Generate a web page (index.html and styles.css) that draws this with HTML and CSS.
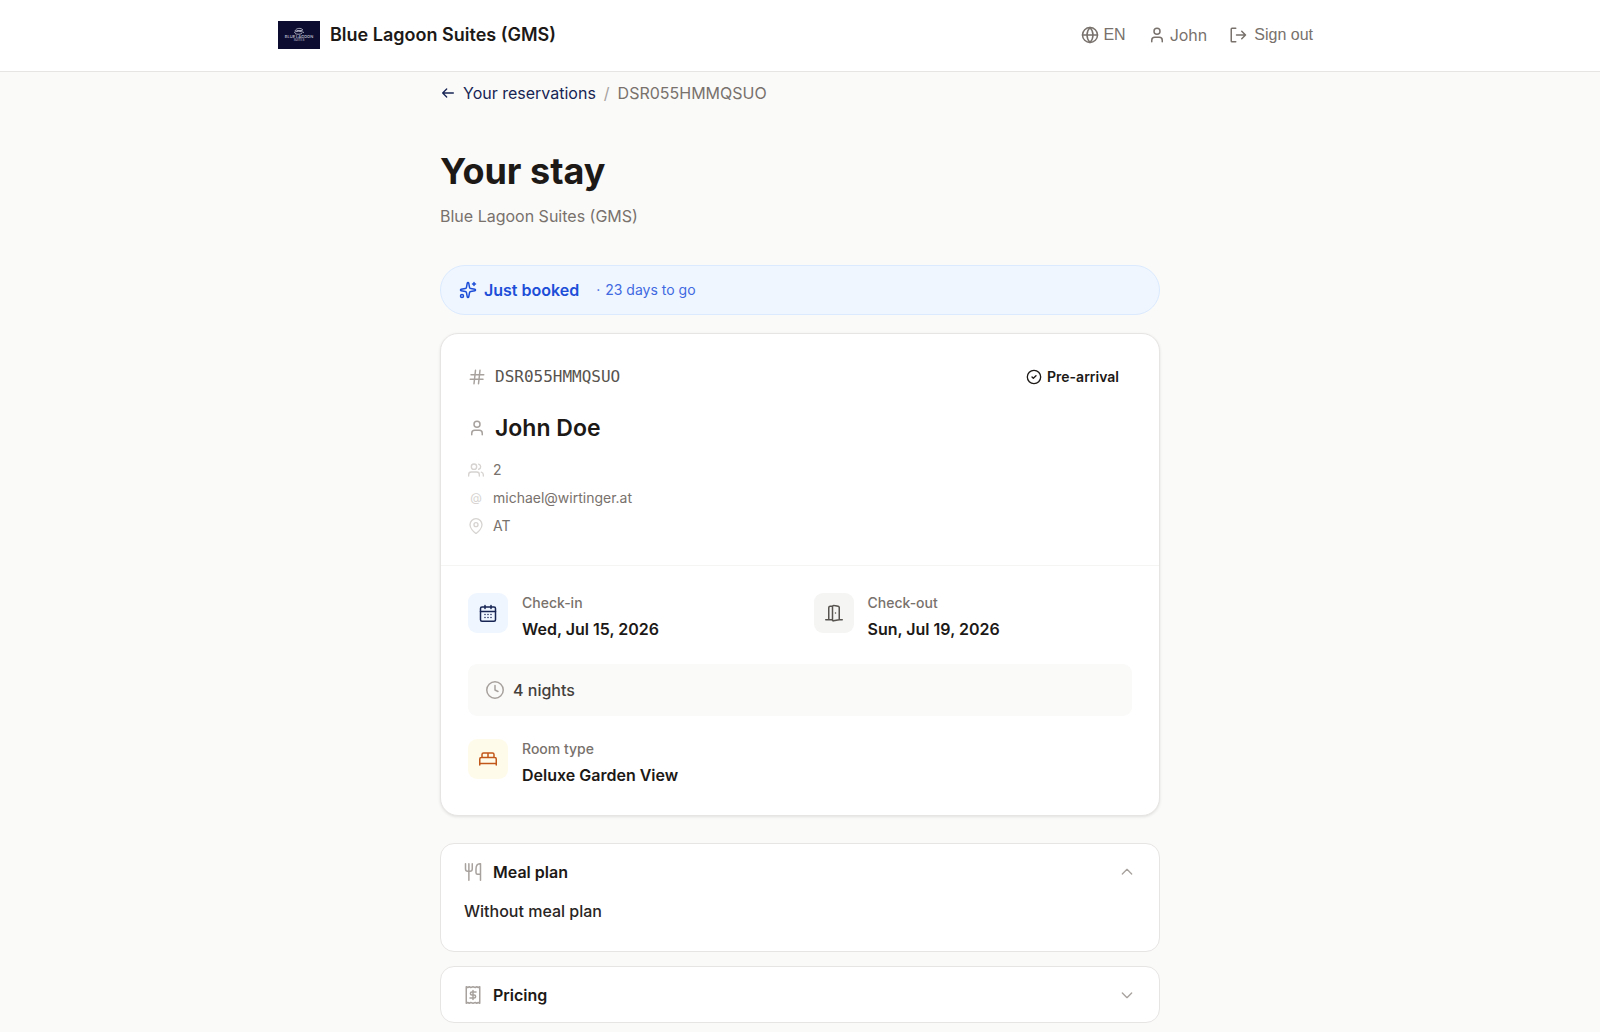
FILE: index.html
```html
<!DOCTYPE html>
<html lang="en">
<head>
  <meta charset="UTF-8" />
  <meta name="viewport" content="width=device-width, initial-scale=1" />
  <title>Your stay - Blue Lagoon Suites (GMS)</title>
  <link rel="stylesheet" href="styles.css">
</head>
<body>
  <header class="site-header">
    <div class="header-inner">
      <a class="brand" href="#">
        <svg class="logo" viewBox="0 0 42 28" role="img" aria-label="Blue Lagoon Suites">
          <rect width="42" height="28" fill="#0b0c30" />
          <g fill="none" stroke="#c9cad8" stroke-width="0.8">
            <path d="M16 11.500c2-1.600 7-1.600 10 0M17 10c1-3 6-3.500 8-1M17 12.500c2 1.200 6 1 7-.5M18.500 9.500h6" />
          </g>
          <text x="21" y="16.600" text-anchor="middle" class="logo-name">BLUE LAGOON</text>
          <text x="21" y="20" text-anchor="middle" class="logo-sub">SUITES</text>
        </svg>
        <span>Blue Lagoon Suites (GMS)</span>
      </a>
      <nav class="header-nav">
        <button class="nav-button lang" type="button">
          <svg class="icon icon-18" viewBox="0 0 24 24"><circle cx="12" cy="12" r="10" /><path d="M12 2a14.500 14.500 0 0 0 0 20 14.500 14.500 0 0 0 0-20M2 12h20" /></svg>
          EN
        </button>
        <a class="nav-link" href="#">
          <svg class="icon icon-18" viewBox="0 0 24 24"><path d="M19 21v-2a4 4 0 0 0-4-4H9a4 4 0 0 0-4 4v2" /><circle cx="12" cy="7" r="4" /></svg>
          John
        </a>
        <button class="nav-button sign-out" type="button">
          <svg class="icon icon-18" viewBox="0 0 24 24"><path d="M9 21H4a1 1 0 0 1-1-1V4a1 1 0 0 1 1-1h5M17 17l5-5-5-5M22 12H10" /></svg>
          Sign out
        </button>
      </nav>
    </div>
  </header>

  <main class="page">
    <nav class="breadcrumb" aria-label="Breadcrumb">
      <a href="#">
        <svg class="icon icon-16" viewBox="0 0 24 24"><path d="M10 18l-6-6 6-6M20 12H4" /></svg>
        Your reservations
      </a>
      <span class="slash">/</span>
      <span>DSR055HMMQSUO</span>
    </nav>

    <h1>Your stay</h1>
    <p class="subtitle">Blue Lagoon Suites (GMS)</p>

    <div class="status-banner">
      <svg class="icon icon-18" viewBox="0 0 24 24"><path d="M11.017 2.814a1 1 0 0 1 1.966 0l1.051 5.558a2 2 0 0 0 1.594 1.594l5.558 1.051a1 1 0 0 1 0 1.966l-5.558 1.051a2 2 0 0 0-1.594 1.594l-1.051 5.558a1 1 0 0 1-1.966 0l-1.051-5.558a2 2 0 0 0-1.594-1.594l-5.558-1.051a1 1 0 0 1 0-1.966l5.558-1.051a2 2 0 0 0 1.594-1.594zM20 2v4M22 4h-4" /><circle cx="4" cy="20" r="2" /></svg>
      <strong>Just booked</strong>
      <span class="countdown"><span>·</span> 23 days to go</span>
    </div>

    <section class="card">
      <div class="card-top">
        <div class="card-head">
          <div class="code">
            <svg class="icon icon-18" viewBox="0 0 24 24"><path d="M4 9h17M3 15h17M10 3L8 21M16 3l-2 18" /></svg>
            <span>DSR055HMMQSUO</span>
          </div>
          <div class="stage">
            <svg class="icon icon-16" viewBox="0 0 24 24"><circle cx="12" cy="12" r="10" /><path d="M9 12l2 2 4-4" /></svg>
            Pre-arrival
          </div>
        </div>
        <h2 class="guest">
          <svg class="icon icon-18" viewBox="0 0 24 24"><path d="M19 21v-2a4 4 0 0 0-4-4H9a4 4 0 0 0-4 4v2" /><circle cx="12" cy="7" r="4" /></svg>
          John Doe
        </h2>
        <ul class="guest-info">
          <li>
            <svg class="icon icon-16" viewBox="0 0 24 24"><path d="M17 21v-2a4 4 0 0 0-4-4H5a4 4 0 0 0-4 4v2" /><circle cx="9" cy="7" r="4" /><path d="M23 21v-2a4 4 0 0 0-3-3.870M16 3.130a4 4 0 0 1 0 7.750" /></svg>
            2
          </li>
          <li><span class="at">@</span> michael@wirtinger.at</li>
          <li>
            <svg class="icon icon-16" viewBox="0 0 24 24"><path d="M21 10c0 5-6 11-8.400 12.800a1 1 0 0 1-1.200 0C9 21 3 15 3 10a9 9 0 0 1 18 0" /><circle cx="12" cy="10" r="3" /></svg>
            AT
          </li>
        </ul>
      </div>

      <div class="card-details">
        <div class="dates">
          <div class="detail">
            <div class="tile tile-blue">
              <svg class="icon icon-18" viewBox="0 0 24 24"><rect x="2" y="4" width="20" height="19" rx="2" /><path d="M8 2v4M16 2v4M2 10h20M8 14h.01M12 14h.01M16 14h.01M8 18h.01M12 18h.01M16 18h.01" /></svg>
            </div>
            <div>
              <div class="label">Check-in</div>
              <div class="value">Wed, Jul 15, 2026</div>
            </div>
          </div>
          <div class="detail">
            <div class="tile tile-gray">
              <svg class="icon icon-18" viewBox="0 0 24 24"><path d="M10 21H1M10 3.500v18a1 1 0 0 0 1.240.97L19 21V4.500a2 2 0 0 0-1.520-1.500l-5-1A2 2 0 0 0 10 3.500zM10 3H7a2 2 0 0 0-2 2v16M14 12h.01M23 21h-4" /></svg>
            </div>
            <div>
              <div class="label">Check-out</div>
              <div class="value">Sun, Jul 19, 2026</div>
            </div>
          </div>
        </div>

        <div class="nights">
          <svg class="icon icon-18" viewBox="0 0 24 24"><circle cx="12" cy="12" r="11" /><path d="M12 6v6l4 2" /></svg>
          4 nights
        </div>

        <div class="detail">
          <div class="tile tile-amber">
            <svg class="icon icon-18" viewBox="0 0 24 24"><path d="M1 20v-8a2 2 0 0 1 2-2h18a2 2 0 0 1 2 2v8M4 10V6a2 2 0 0 1 2-2h12a2 2 0 0 1 2 2v4M12 4v6M1 18h22" /></svg>
          </div>
          <div>
            <div class="label">Room type</div>
            <div class="value">Deluxe Garden View</div>
          </div>
        </div>
      </div>
    </section>

    <div class="panels">
      <section class="panel">
        <button class="panel-toggle" type="button" aria-expanded="true" aria-controls="mealPlan">
          <svg class="icon icon-18" viewBox="0 0 24 24"><path d="M2 1v7a3 3 0 0 0 3 3h3a3 3 0 0 0 3-3V1M6.500 1v22M22 23V1h-1c-3 0-5 3-5 7v5a2 2 0 0 0 2 2h4" /></svg>
          <span>Meal plan</span>
          <svg class="icon icon-16 chevron" viewBox="0 0 24 24"><path d="M5 15l7-7 7 7" /></svg>
        </button>
        <div class="panel-body" id="mealPlan">Without meal plan</div>
      </section>
      <section class="panel">
        <button class="panel-toggle" type="button" aria-expanded="false" aria-controls="pricing">
          <svg class="icon icon-18" viewBox="0 0 24 24"><path d="M3 1v22l2-1 2 1 2-1 3 1 3-1 2 1 2-1 2 1V1l-2 1-2-1-2 1-3-1-3 1-2-1-2 1zM16 8h-5.500a2 2 0 0 0 0 4h3a2 2 0 0 1 0 4H8M12 6v12" /></svg>
          <span>Pricing</span>
          <svg class="icon icon-16 chevron" viewBox="0 0 24 24"><path d="M5 9l7 7 7-7" /></svg>
        </button>
        <div class="panel-body" id="pricing" hidden></div>
      </section>
    </div>
  </main>

  <script>
    document.querySelectorAll('.panel-toggle').forEach((btn) => {
      btn.addEventListener('click', () => {
        const open = btn.getAttribute('aria-expanded') === 'true';
        btn.setAttribute('aria-expanded', String(!open));
        document.getElementById(btn.getAttribute('aria-controls')).hidden = open;
      });
    });
  </script>
</body>
</html>
```
FILE: styles.css
```css
* {
  box-sizing: border-box;
}
body {
  margin: 0;
  font-family: Inter, "Liberation Sans", sans-serif;
  font-size: 16px;
  line-height: 24px;
  background-color: #fafaf9;
  color: #1c1917;
}
h1, h2, p, ul {
  margin: 0;
  padding: 0;
}
a {
  color: inherit;
  text-decoration: none;
}
button {
  background: none;
  border: none;
  padding: 0;
  color: inherit;
  cursor: pointer;
}
.icon {
  flex-shrink: 0;
  fill: none;
  stroke: currentColor;
  stroke-width: 2;
  stroke-linecap: round;
  stroke-linejoin: round;
}
.icon-18 {
  width: 18px;
  height: 18px;
}
.icon-16 {
  width: 16px;
  height: 16px;
}

/* header */
.site-header {
  background-color: #fff;
  border-bottom: 1px solid #e7e5e4;
}
.header-inner {
  max-width: 1080px;
  min-height: 71px;
  margin: 0 auto;
  padding: 0 18px 1px;
  display: flex;
  justify-content: space-between;
  align-items: center;
}
.brand {
  display: flex;
  align-items: center;
  gap: 10px;
  font-size: 18px;
  font-weight: 600;
}
.logo {
  width: 42px;
  height: 28px;
}
.logo-name {
  font-size: 4px;
  font-weight: 500;
  fill: #c9cad8;
}
.logo-sub {
  font-size: 3px;
  fill: #a5a6ba;
}
.header-nav {
  display: flex;
  align-items: center;
  gap: 22px;
  padding-right: 9px;
  color: #78716c;
}
.nav-link, .nav-button {
  display: flex;
  align-items: center;
  gap: 4px;
}
.nav-button {
  font-family: "Liberation Sans", Arial, sans-serif;
  font-size: 16px;
}
.sign-out {
  gap: 7px;
}

/* page */
.page {
  max-width: 756px;
  margin: 0 auto;
  padding: 9px 18px;
}
.breadcrumb {
  display: flex;
  align-items: center;
  gap: 8px;
  color: #78716c;
}
.breadcrumb a {
  display: flex;
  align-items: center;
  gap: 7px;
  color: #172554;
}
.slash {
  color: #a8a29e;
}
h1 {
  margin-top: 46px;
  font-size: 36px;
  line-height: 40px;
  font-weight: 700;
}
.subtitle {
  margin-top: 13px;
  color: #78716c;
}
.status-banner {
  display: flex;
  align-items: center;
  gap: 7px;
  margin-top: 37px;
  padding: 12px 18px;
  border: 1px solid #dbeafe;
  border-radius: 26px;
  background-color: #eff6ff;
  color: #1d4ed8;
}
.status-banner strong {
  font-weight: 600;
}
.countdown {
  display: flex;
  gap: 5px;
  margin-left: 10px;
  font-size: 14px;
  color: #4169e1;
}

/* reservation card */
.card {
  margin-top: 18px;
  border: 1px solid #e7e5e4;
  border-radius: 18px;
  background-color: #fff;
  box-shadow: 0 1px 3px rgba(0, 0, 0, 0.1);
}
.card-top {
  padding: 31px 27px 29px;
  border-bottom: 1px solid #f5f5f4;
}
.card-head {
  display: flex;
  justify-content: space-between;
  align-items: center;
}
.code {
  display: flex;
  align-items: center;
  gap: 9px;
  color: #a8a29e;
}
.code span {
  font-family: "DejaVu Sans Mono", monospace;
  color: #57534e;
}
.stage {
  display: flex;
  align-items: center;
  gap: 5px;
  padding-right: 13px;
  font-size: 14px;
  font-weight: 600;
}
.guest {
  display: flex;
  align-items: center;
  gap: 9px;
  margin-top: 24px;
  font-size: 23px;
  line-height: 30px;
  font-weight: 600;
}
.guest .icon {
  color: #a8a29e;
}
.guest-info {
  display: flex;
  flex-direction: column;
  gap: 8px;
  margin-top: 17px;
  list-style: none;
  font-size: 14px;
  line-height: 20px;
  color: #78716c;
}
.guest-info li {
  display: flex;
  align-items: center;
  gap: 9px;
}
.guest-info .icon, .at {
  width: 16px;
  color: #d6d3d1;
}
.at {
  text-align: center;
  font-size: 12px;
}
.card-details {
  display: flex;
  flex-direction: column;
  gap: 23px;
  padding: 27px 27px 28px;
}
.dates {
  display: grid;
  grid-template-columns: 1fr 1fr;
  gap: 27px;
}
.detail {
  display: flex;
  gap: 14px;
}
.tile {
  display: flex;
  align-items: center;
  justify-content: center;
  width: 40px;
  height: 40px;
  border-radius: 9px;
}
.tile-blue {
  background-color: #eff6ff;
  color: #172554;
}
.tile-gray {
  background-color: #f5f5f4;
  color: #57534e;
}
.tile-amber {
  background-color: #fffbeb;
  color: #c2571a;
}
.label {
  font-size: 14px;
  line-height: 20px;
  font-weight: 500;
  color: #78716c;
}
.value {
  margin-top: 4px;
  font-weight: 600;
}
.nights {
  display: flex;
  align-items: center;
  gap: 9px;
  padding: 14px 18px;
  border-radius: 9px;
  background-color: #fafaf9;
  font-weight: 500;
  color: #44403c;
}
.nights .icon {
  color: #a8a29e;
}

/* collapsible panels */
.panels {
  display: flex;
  flex-direction: column;
  gap: 14px;
  margin-top: 27px;
}
.panel {
  border: 1px solid #e7e5e4;
  border-radius: 14px;
  background-color: #fff;
}
.panel-toggle {
  display: flex;
  align-items: center;
  gap: 11px;
  width: 100%;
  padding: 16px 24px 15px 23px;
  font: inherit;
  font-weight: 600;
  text-align: left;
}
.panel-toggle .icon {
  color: #a8a29e;
}
.chevron {
  margin-left: auto;
}
.panel-body {
  padding: 0 23px 28px;
  font-weight: 500;
  color: #292524;
}
```
